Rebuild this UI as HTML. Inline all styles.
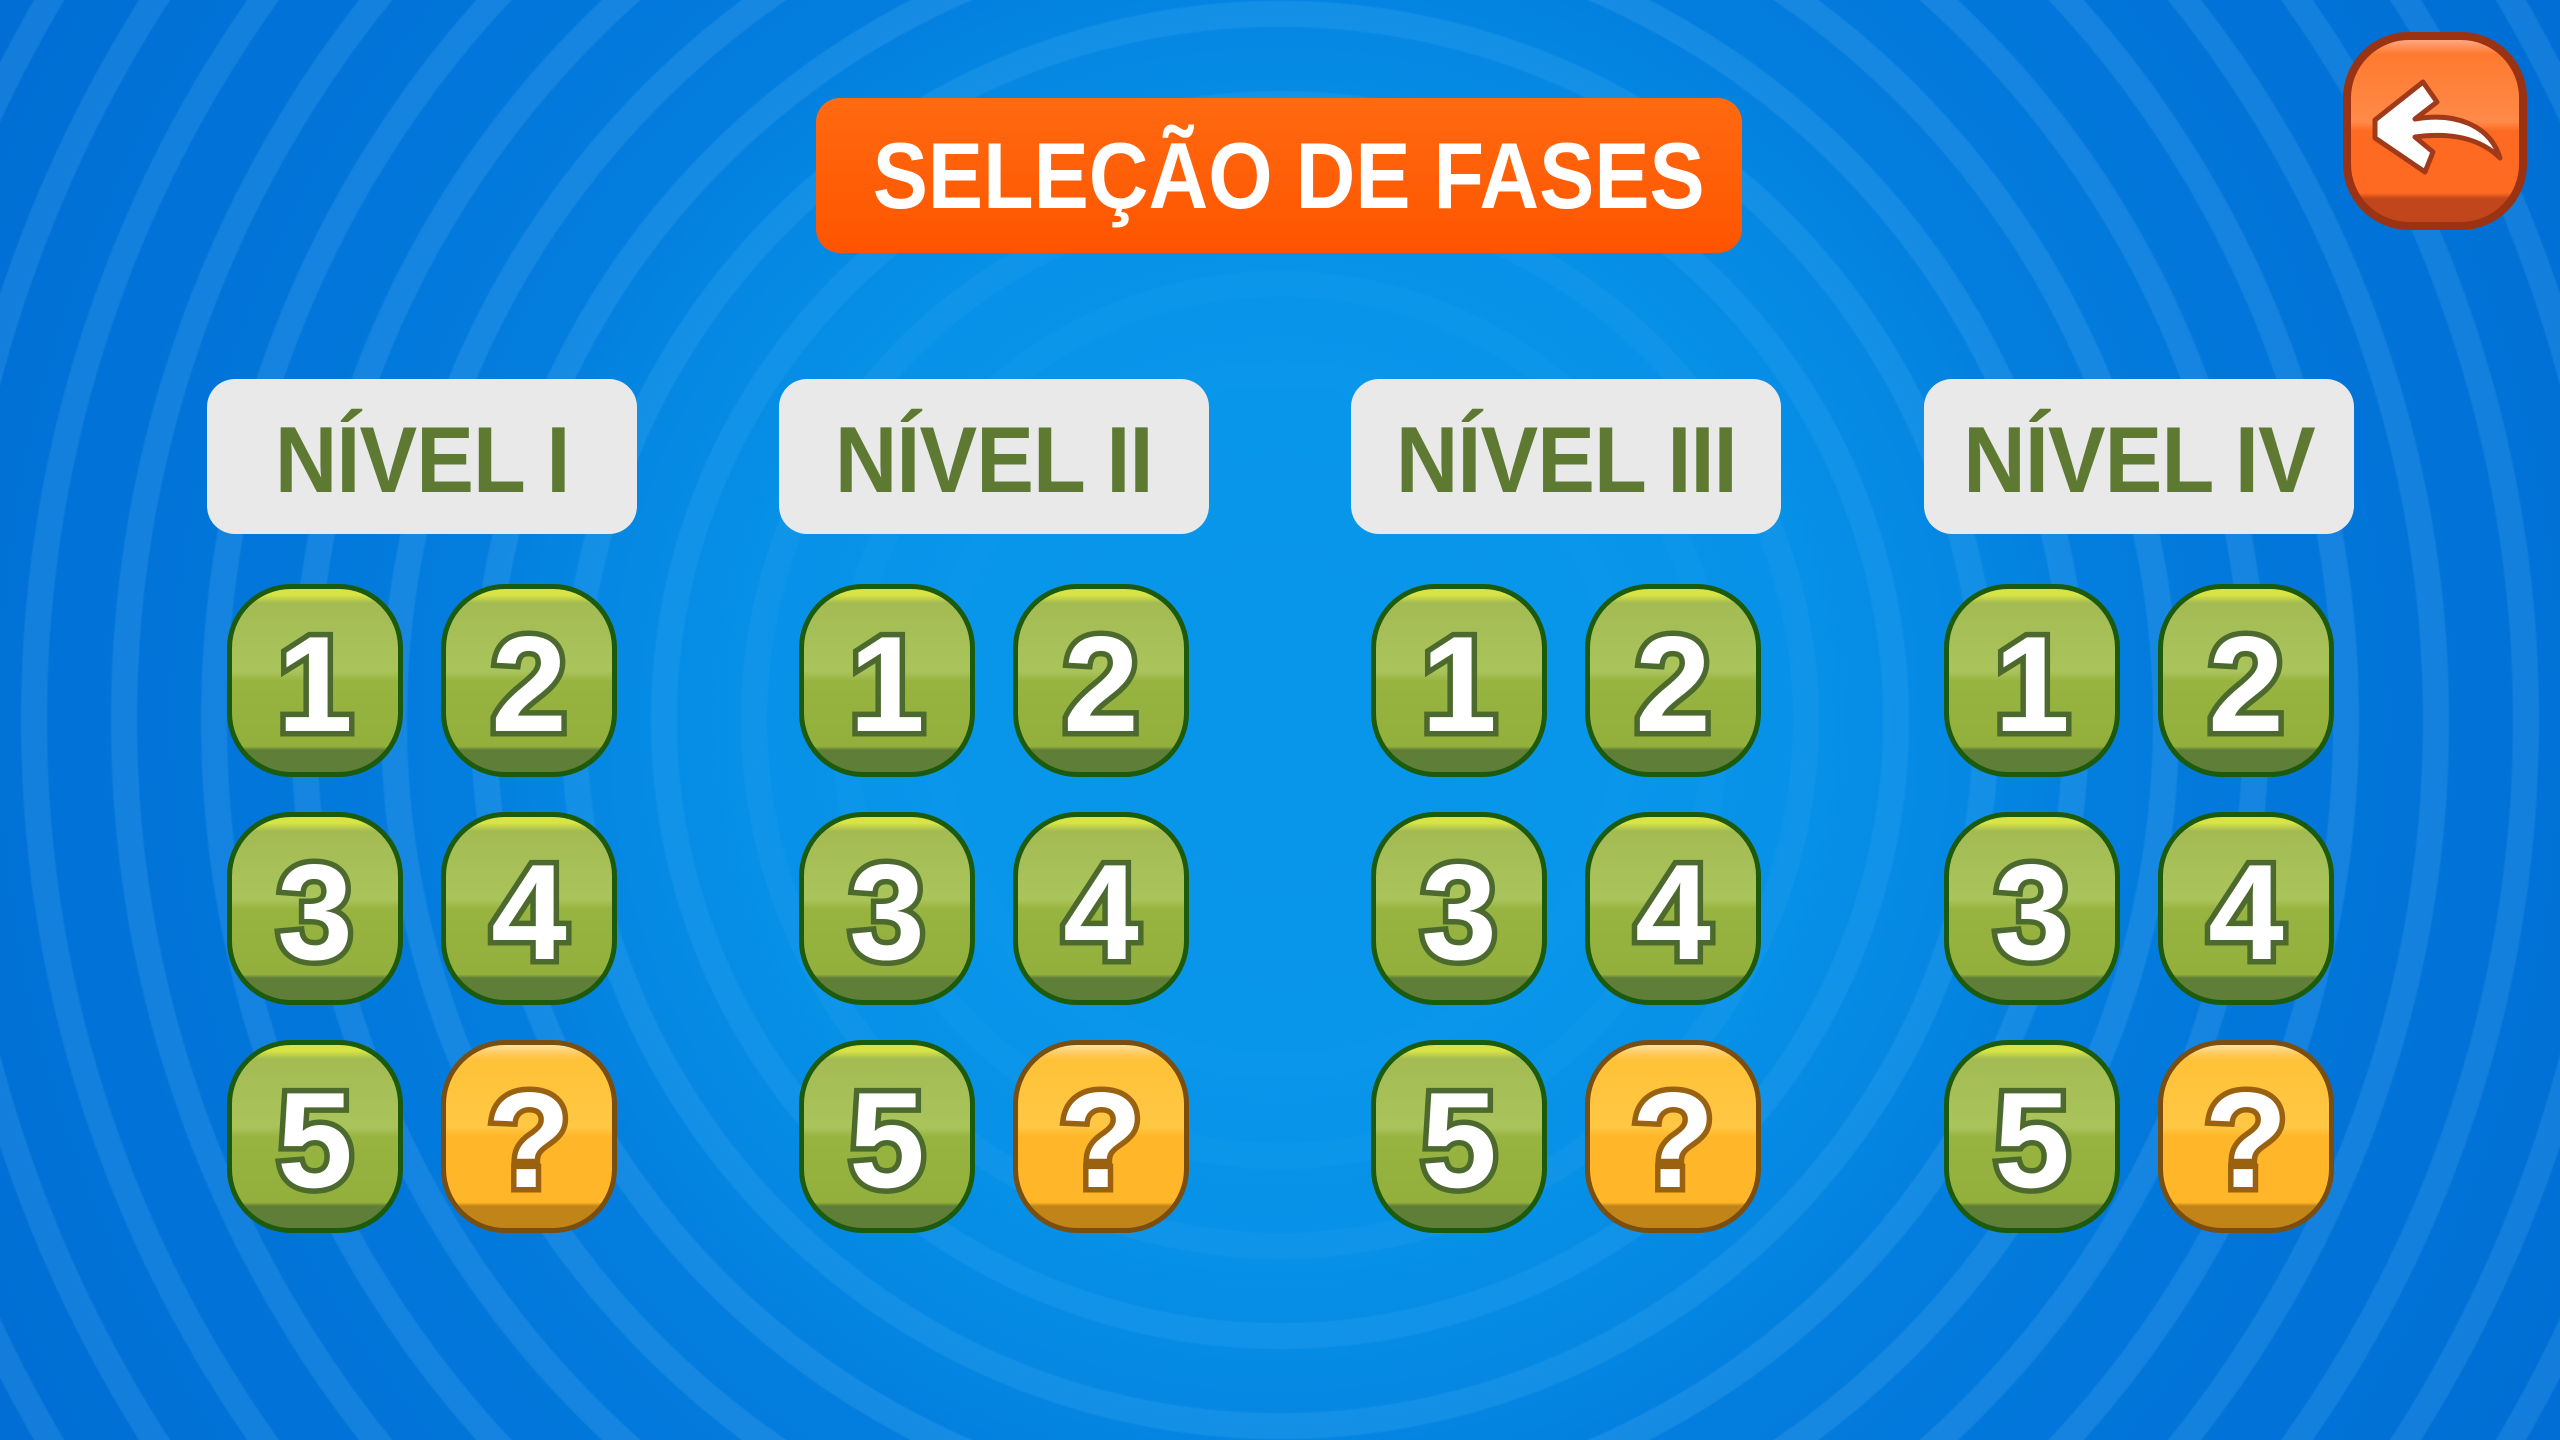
<!DOCTYPE html>
<html><head><meta charset="utf-8"><style>
html,body{margin:0;padding:0;}
body{width:2560px;height:1440px;overflow:hidden;position:relative;font-family:"Liberation Sans",sans-serif;
background:
radial-gradient(circle at 1280px 720px, rgba(8,150,234,1) 0px, rgba(8,150,234,0.9) 350px, rgba(8,150,234,0) 800px),
repeating-radial-gradient(circle at 1280px 720px, rgba(255,255,255,0) 0px, rgba(255,255,255,0) 62px, rgba(120,200,255,0.16) 64px, rgba(120,200,255,0.16) 88px, rgba(255,255,255,0) 90px),
radial-gradient(circle at 1280px 720px,#0898ea 0%,#058ae4 35%,#0276da 70%,#006ed4 100%);}
.title{position:absolute;left:816px;top:98px;width:926px;height:155px;border-radius:24px;background:linear-gradient(#ff6a10,#ff5400);color:#fff;font-weight:bold;font-size:94px;text-align:center;line-height:155px;white-space:nowrap;}
.title span{display:inline-block;transform:scaleX(0.88);}
.hdr span{display:inline-block;transform:scaleX(0.92);}
.hdr{position:absolute;top:379px;width:430px;height:155px;border-radius:28px;background:#e9e9e9;color:#5e7a32;font-weight:bold;font-size:94px;text-align:center;line-height:162px;letter-spacing:-1px;white-space:nowrap;}
.btn{position:absolute;width:176px;height:193px;box-sizing:border-box;border:5px solid #1c5a0e;border-radius:64px;
background:linear-gradient(#d8e446 0,#d8e446 6px,#a3bb52 14px,#aac45c 45%,#98b440 50%,#94b03c 86%,#5f7e37 88%,#5f7e37 100%);
color:#fff;font-weight:bold;font-size:136px;text-align:center;line-height:190px;
-webkit-text-stroke:11px #4d6a2e;paint-order:stroke fill;}
.q{border-color:#7a4e10;background:linear-gradient(#ffe39a 0,#ffd070 6px,#ffc238 14px,#ffc744 45%,#ffb628 50%,#ffb628 86%,#c08418 88%,#c08418 100%);-webkit-text-stroke:11px #9a6210;}
.back{position:absolute;left:2343px;top:32px;width:184px;height:198px;box-sizing:border-box;border:8px solid #9a3214;border-radius:66px;
background:linear-gradient(#ffa880 0,#ff9260 6px,#ff7a30 14px,#ff8a48 45%,#ff6a22 50%,#ff6a22 84%,#c2461c 87%,#c2461c 100%);}
</style></head><body>
<div class="title"><span>SELEÇÃO DE FASES</span></div>

<div class="hdr" style="left:207px"><span>NÍVEL I</span></div>
<div class="hdr" style="left:779px"><span>NÍVEL II</span></div>
<div class="hdr" style="left:1351px"><span>NÍVEL III</span></div>
<div class="hdr" style="left:1924px"><span>NÍVEL IV</span></div>

<div class="btn" style="left:227px;top:584px">1</div><div class="btn" style="left:441px;top:584px">2</div>
<div class="btn" style="left:227px;top:812px">3</div><div class="btn" style="left:441px;top:812px">4</div>
<div class="btn" style="left:227px;top:1040px">5</div><div class="btn q" style="left:441px;top:1040px">?</div>

<div class="btn" style="left:799px;top:584px">1</div><div class="btn" style="left:1013px;top:584px">2</div>
<div class="btn" style="left:799px;top:812px">3</div><div class="btn" style="left:1013px;top:812px">4</div>
<div class="btn" style="left:799px;top:1040px">5</div><div class="btn q" style="left:1013px;top:1040px">?</div>

<div class="btn" style="left:1371px;top:584px">1</div><div class="btn" style="left:1585px;top:584px">2</div>
<div class="btn" style="left:1371px;top:812px">3</div><div class="btn" style="left:1585px;top:812px">4</div>
<div class="btn" style="left:1371px;top:1040px">5</div><div class="btn q" style="left:1585px;top:1040px">?</div>

<div class="btn" style="left:1944px;top:584px">1</div><div class="btn" style="left:2158px;top:584px">2</div>
<div class="btn" style="left:1944px;top:812px">3</div><div class="btn" style="left:2158px;top:812px">4</div>
<div class="btn" style="left:1944px;top:1040px">5</div><div class="btn q" style="left:2158px;top:1040px">?</div>

<div class="back"></div>
<svg style="position:absolute;left:2320px;top:20px" width="240" height="230" viewBox="0 0 240 230">
<path d="M103 62 L117 82 L95 99 C135 92 170 105 180 138 C160 118 130 112 95 117 L113 132 L105 152 L55 118 L55 100 Z" fill="#fff" stroke="#a03a18" stroke-width="5" stroke-linejoin="round"/>
</svg>
</body></html>
